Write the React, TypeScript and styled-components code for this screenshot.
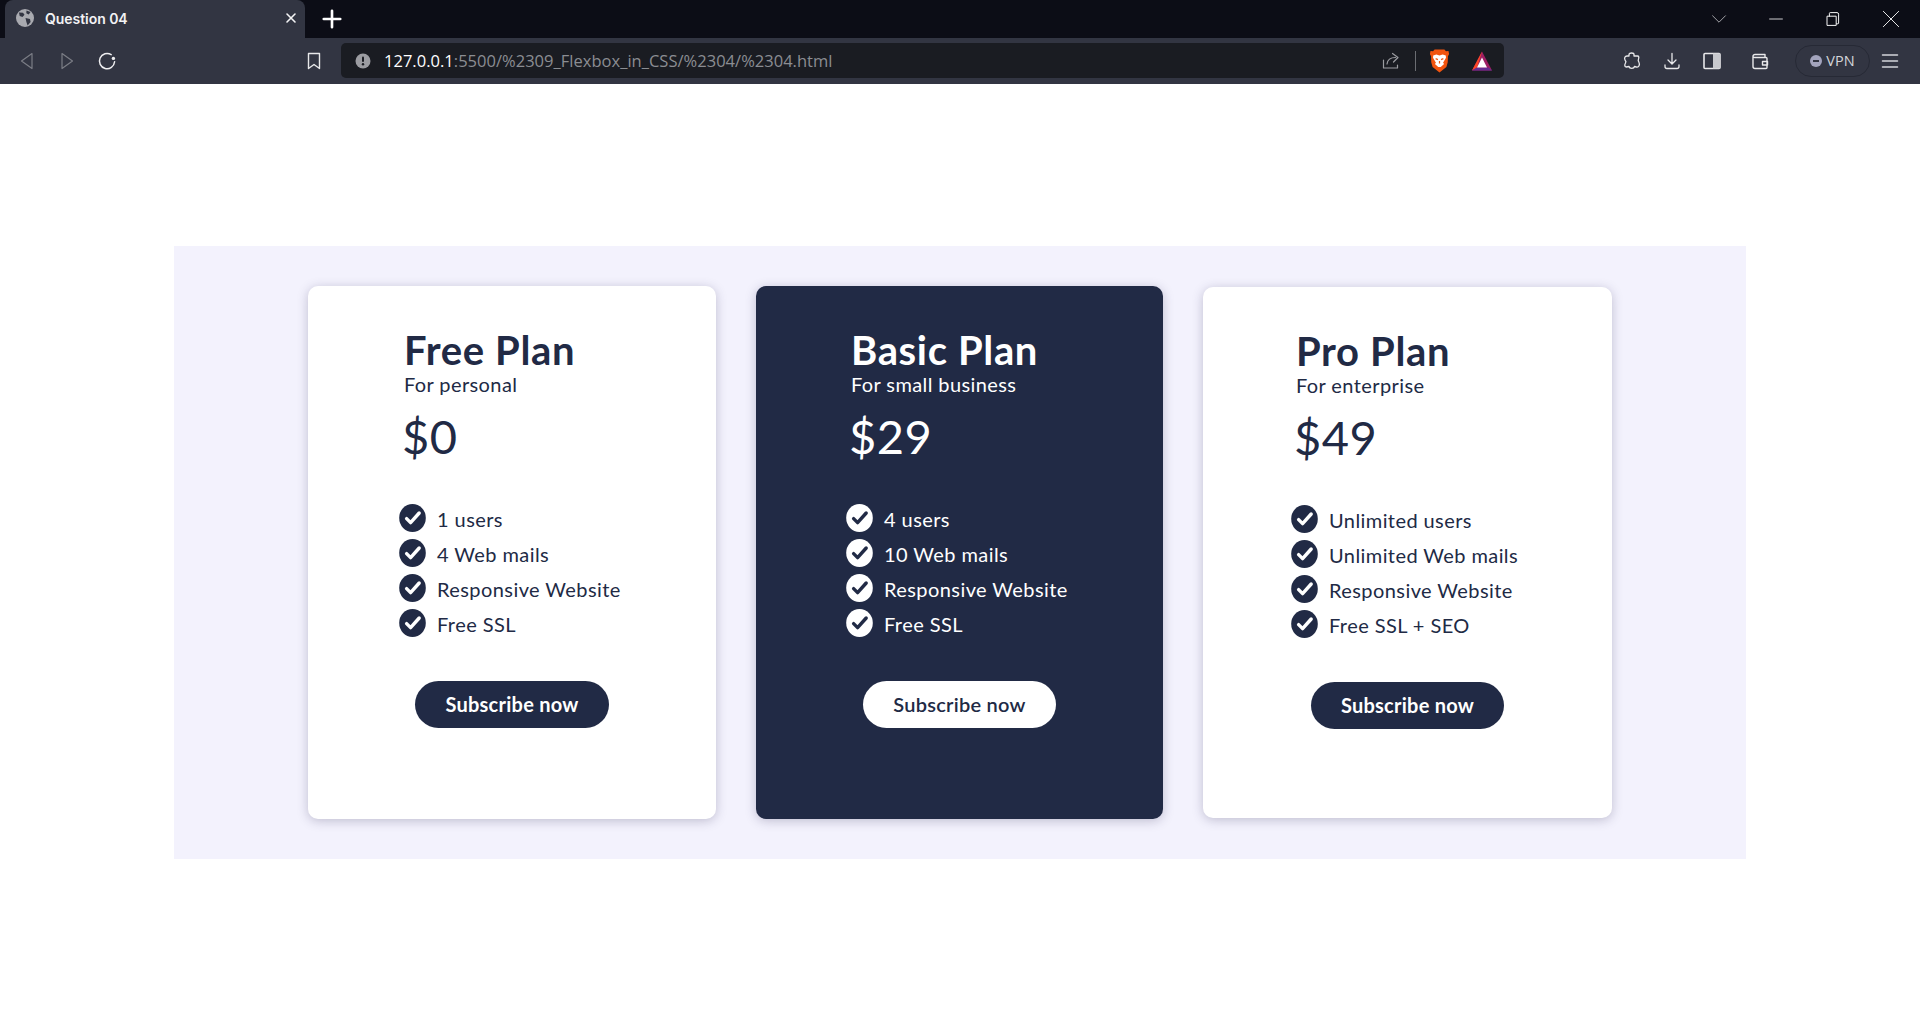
import React from 'react';
import styled, { createGlobalStyle } from 'styled-components';

const NAVY = '#212a45';
const CHROME = '#323542';
const STRIP = '#0c0d16';

const GlobalStyle = createGlobalStyle`
    html, body {
        background: #ffffff;
        margin: 0;
        padding: 0;
    }
    * {
        box-sizing: border-box;
    }
`;

const Page = styled.div`
    min-height: 1017px;
    width: 1920px;
    overflow: hidden;
`;

/* browser chrome */

const TabStrip = styled.div`
    align-items: flex-end;
    background: ${STRIP};
    display: flex;
    height: 38px;
    padding-left: 5px;
`;

const Tab = styled.div`
    align-items: center;
    background: ${CHROME};
    border-radius: 8px 8px 0 0;
    color: #f2f2f4;
    display: flex;
    font-family: Inter, sans-serif;
    font-size: 14px;
    font-weight: 600;
    height: 38px;
    letter-spacing: -0.05px;
    padding: 0 6px 2px 11px;
    width: 300px;
`;

const TabTitle = styled.span`
    flex: 1;
    margin-left: 11px;
`;

const Slot = styled.div<{ $w?: number; $ml?: number }>`
    align-items: center;
    display: flex;
    flex-shrink: 0;
    height: 100%;
    justify-content: center;
    margin-left: ${p => p.$ml ?? 0}px;
    width: ${p => p.$w ?? 40}px;
`;

const Toolbar = styled.div`
    align-items: center;
    background: ${CHROME};
    display: flex;
    height: 46px;
    padding: 0 0 1px 7px;
`;

const AddressBar = styled.div`
    align-items: center;
    background: #1a1c22;
    border-radius: 5px;
    display: flex;
    height: 35px;
    margin-left: 7px;
    padding: 0 11px 0 14px;
    width: 1163px;
`;

const Url = styled.div`
    color: #8b8d92;
    flex: 1;
    font-family: "Open Sans", sans-serif;
    font-size: 16.5px;
    letter-spacing: 0.02px;
    margin-left: 13px;
    white-space: nowrap;
`;

const UrlHost = styled.span`
    color: #ffffff;
`;

const Divider = styled.div`
    background: #6b6d72;
    height: 20px;
    margin: 0 13px 0 14px;
    width: 1px;
`;

const VpnPill = styled.div`
    align-items: center;
    border: 1px solid #262935;
    border-radius: 16px;
    color: #d4d5da;
    display: flex;
    font-family: "Open Sans", sans-serif;
    font-size: 14.5px;
    gap: 4px;
    height: 32px;
    justify-content: center;
    margin-left: 15px;
    width: 75px;
`;

const VpnDot = styled.span`
    background: #a3a4bd;
    border-radius: 50%;
    height: 12px;
    position: relative;
    width: 12px;

    &::after {
        background: #323542;
        content: '';
        height: 2px;
        left: 3px;
        position: absolute;
        top: 5px;
        width: 6px;
    }
`;

/* pricing */

const Main = styled.main`
    padding: 162px 174px 0;
`;

const PricingSection = styled.section`
    align-items: center;
    background: #f3f2fd;
    display: flex;
    gap: 40px;
    height: 613px;
    justify-content: center;
`;

const Card = styled.article<{ $dark?: boolean; $w: number; $h: number; $pl: number }>`
    background: ${p => (p.$dark ? NAVY : '#ffffff')};
    border-radius: 10px;
    box-shadow: 0 2px 11px rgba(50, 48, 90, 0.27);
    color: ${p => (p.$dark ? '#ffffff' : NAVY)};
    font-family: Lato, sans-serif;
    height: ${p => p.$h}px;
    padding: 39px 0 0 ${p => p.$pl}px;
    width: ${p => p.$w}px;
`;

const PlanName = styled.h2`
    font-size: 40px;
    font-weight: 700;
    letter-spacing: 0.65px;
    line-height: 50px;
    margin: 0;
`;

const PlanFor = styled.p`
    font-size: 20px;
    letter-spacing: 0.4px;
    line-height: 22px;
    margin: -2px 0 0;
`;

const Price = styled.div`
    font-size: 47px;
    font-weight: 400;
    letter-spacing: 0.5px;
    line-height: 60px;
    margin: 11px 0 0 -2px;
`;

const Features = styled.ul`
    display: flex;
    flex-direction: column;
    gap: 7px;
    list-style: none;
    margin: 38px 0 0 -5px;
    padding: 0;
`;

const Feature = styled.li`
    align-items: center;
    display: flex;
    font-size: 20px;
    gap: 11px;
    height: 28px;
    letter-spacing: 0.42px;
`;

const FeatureLabel = styled.span`
    padding-top: 2px;
`;

const SubscribeRow = styled.div<{ $ml: number }>`
    display: flex;
    margin: 44px 0 0 ${p => p.$ml}px;
`;

const Subscribe = styled.button<{ $dark?: boolean; $w: number }>`
    background: ${p => (p.$dark ? '#ffffff' : NAVY)};
    border: none;
    border-radius: 24px;
    color: ${p => (p.$dark ? NAVY : '#ffffff')};
    font-family: Lato, sans-serif;
    font-size: 20px;
    font-weight: ${p => (p.$dark ? 600 : 700)};
    height: 47px;
    letter-spacing: 0.25px;
    padding: 0 0 2px;
    width: ${p => p.$w}px;
`;

/* drawings */

function CheckMark({ dark }: { dark?: boolean }) {
    const disc = dark ? '#ffffff' : NAVY;
    const tick = dark ? NAVY : '#ffffff';
    return <svg width="27" height="28" viewBox="0 0 27 28">
        <ellipse cx="13.5" cy="14" rx="13.3" ry="14" fill={disc} />
        <path d="M7.6 14.6l4 4 8.6-9.6" fill="none" stroke={tick} strokeWidth="3.4" strokeLinecap="round" strokeLinejoin="round" />
    </svg>;
}

function Globe() {
    return <svg width="18" height="18" viewBox="0 0 18 18">
        <circle cx="9" cy="9" r="9" fill="#a9aab0" />
        <path d="M3 3.500l4 .2 1.500 2-2 2.300-2.800-1zM9.500 9l4.500 1 .6 3-3 3.600-1.200-3.600zM10.500 1.500l4 1.500-1.800 2.600-2.400-1.400z" fill="#323542" />
    </svg>;
}

function Stroke({ size = 20, width = 1.4, color = '#e8e8ea', d, fill = 'none' }: { size?: number; width?: number; color?: string; d: string; fill?: string }) {
    return <svg width={size} height={size} viewBox="0 0 20 20">
        <path d={d} fill={fill} stroke={color} strokeWidth={width} strokeLinecap="round" strokeLinejoin="round" />
    </svg>;
}

function Reload() {
    return <svg width="20" height="20" viewBox="0 0 20 20">
        <path d="M14.200 3.700A7.600 7.600 0 1 0 17.600 10.800" fill="none" stroke="#eeeef0" strokeWidth="1.500" strokeLinecap="round" />
        <circle cx="16.400" cy="7.400" r="1.700" fill="#eeeef0" />
    </svg>;
}

function AlertDot() {
    return <svg width="16" height="16" viewBox="0 0 16 16">
        <circle cx="8" cy="8" r="7.500" fill="#9b9ca1" />
        <rect x="7" y="3.500" width="2" height="5.600" rx="1" fill="#1a1c22" />
        <circle cx="8" cy="11.200" r="1.200" fill="#1a1c22" />
    </svg>;
}

function BraveLion() {
    return <svg width="21" height="24" viewBox="0 0 19 23">
        <path d="M4.800 0.400h9.400l1.500 1.800 2.400-.3.600 3-1.100 2.100-.2 5.800-1.300 4.500-6.600 5.300-6.600-5.300-1.300-4.500-.2-5.800L.3 4.900l.6-3 2.400.3z" fill="#f1540f" />
        <path d="M3.500 6.200l3-1 3 1 3-1 3 1 .2 2.300-1.800 3-1 1.600 1 1.300-3.200 2.800h-2.400l-3.200-2.800 1-1.300-1-1.600-1.800-3z" fill="#ffffff" />
        <path d="M5.800 9.300l2.200.8M13.200 9.300l-2.200.8M9.500 11.500v2.500" stroke="#f1540f" strokeWidth="1.200" fill="none" />
    </svg>;
}

function BatTriangle() {
    return <svg width="22" height="20" viewBox="0 0 20 20">
        <path d="M10 0.500L0 19.500h20z" fill="#9e1f63" />
        <path d="M10 0.500L0 19.500l5-3z" fill="#ff4724" />
        <path d="M0 19.500h20l-3.500-3h-11.500z" fill="#662d91" />
        <path d="M10 6.500l-5 10h10z" fill="#ffffff" />
    </svg>;
}

const PLANS = [
    { name: 'Free Plan', sub: 'For personal', price: '$0', w: 408, h: 533, pl: 96, btn: 107, btnW: 194,
      items: ['1 users', '4 Web mails', 'Responsive Website', 'Free SSL'] },
    { name: 'Basic Plan', sub: 'For small business', price: '$29', dark: true, w: 407, h: 533, pl: 95, btn: 107, btnW: 193,
      items: ['4 users', '10 Web mails', 'Responsive Website', 'Free SSL'] },
    { name: 'Pro Plan', sub: 'For enterprise', price: '$49', w: 409, h: 531, pl: 93, btn: 108, btnW: 193,
      items: ['Unlimited users', 'Unlimited Web mails', 'Responsive Website', 'Free SSL + SEO'] },
];

function BrowserChrome() {
    return <>
        <TabStrip>
            <Tab>
                <Globe />
                <TabTitle>Question 04</TabTitle>
                <Stroke size={16} width={2} color="#f4f4f5" d="M5 5l10 10M15 5L5 15" />
            </Tab>
            <Slot $ml={7}><Stroke size={22} width={2.4} color="#ffffff" d="M10 2.500v15M2.500 10h15" /></Slot>
            <Slot $ml={1347}><Stroke size={16} width={1} color="#c8c8cc" d="M2 6l8 8 8-8" /></Slot>
            <Slot $ml={17}><Stroke size={16} width={1} color="#ffffff" d="M2 10h16" /></Slot>
            <Slot $ml={17}><Stroke size={16} width={1.2} color="#ffffff" d="M3 6.500h11v11.500h-11zM5.500 6.500v-3.500a1 1 0 0 1 1-1h8.500a2 2 0 0 1 2 2v11a1 1 0 0 1-1 1h-1.500" /></Slot>
            <Slot $ml={18}><Stroke size={18} width={1} color="#ffffff" d="M1.500 1.500l17 17M18.500 1.500l-17 17" /></Slot>
        </TabStrip>
        <Toolbar>
            <Slot><Stroke size={20} width={1.2} color="#7b7d85" d="M15 2.500L4.500 10 15 17.500z" /></Slot>
            <Slot><Stroke size={20} width={1.2} color="#7b7d85" d="M5 2.500L15.500 10 5 17.500z" /></Slot>
            <Slot><Reload /></Slot>
            <Slot $ml={167}><Stroke size={20} width={1.4} color="#e8e8ea" d="M4.500 2.500h11v15L10 13.500l-5.500 4z" /></Slot>
            <AddressBar>
                <AlertDot />
                <Url><UrlHost>127.0.0.1</UrlHost>:5500/%2309_Flexbox_in_CSS/%2304/%2304.html</Url>
                <Stroke size={20} width={1.2} color="#9b9ca1" d="M2.500 9v8h14v-3M6 13c.5-4 3-6.500 8.500-6.500M11.500 2.500l5.500 4-4.500 4.500" />
                <Divider />
                <BraveLion />
                <Slot $w={22} $ml={21}><BatTriangle /></Slot>
            </AddressBar>
            <Slot $ml={108}><Stroke size={20} width={1.3} d="M7 3.500C7 1.500 12 1.500 12 3.500L12 5H15.500C17 5 17 6.500 16.500 8C16 9 16 10 17 11.500C18 13.500 17 16.500 14.500 16L12.500 15.500C12 18 7.500 18 7 15.500L4 16C2.500 15.500 2.500 13.500 3.500 12C4.300 11 4 10 3 9C2 7 3 5 5 5L7 5Z" /></Slot>
            <Slot><Stroke size={20} width={1.3} d="M10 2.500v10M6 9l4 4 4-4M3 14v1.500a2 2 0 0 0 2 2h10a2 2 0 0 0 2-2V14" /></Slot>
            <Slot>
                <svg width="18" height="18" viewBox="0 0 18 18">
                    <rect x="1" y="1.500" width="16" height="15" rx="1" fill="none" stroke="#e8e8ea" strokeWidth="1.600" />
                    <rect x="10" y="1.500" width="7" height="15" fill="#c8c9ce" />
                </svg>
            </Slot>
            <Slot $ml={8}><Stroke size={20} width={1.4} d="M3 5.500v10a2 2 0 0 0 2 2h11a1 1 0 0 0 1-1v-9a1 1 0 0 0-1-1H5a2 2 0 0 1-2-1 2 2 0 0 1 2-2h10v3M12.500 10.500h5v3.500h-5z" /></Slot>
            <VpnPill><VpnDot />VPN</VpnPill>
            <Slot><Stroke size={20} width={1.500} color="#d4d5da" d="M2.500 4h15M2.500 10h15M2.500 16h15" /></Slot>
        </Toolbar>
    </>;
}

export default function App() {
    return <Page>
        <GlobalStyle />
        <BrowserChrome />
        <Main>
            <PricingSection>
                {PLANS.map(plan => (
                    <Card key={plan.name} $dark={plan.dark} $w={plan.w} $h={plan.h} $pl={plan.pl}>
                        <PlanName>{plan.name}</PlanName>
                        <PlanFor>{plan.sub}</PlanFor>
                        <Price>{plan.price}</Price>
                        <Features>
                            {plan.items.map(item => (
                                <Feature key={item}>
                                    <CheckMark dark={plan.dark} />
                                    <FeatureLabel>{item}</FeatureLabel>
                                </Feature>
                            ))}
                        </Features>
                        <SubscribeRow $ml={plan.btn - plan.pl}>
                            <Subscribe $dark={plan.dark} $w={plan.btnW}>Subscribe now</Subscribe>
                        </SubscribeRow>
                    </Card>
                ))}
            </PricingSection>
        </Main>
    </Page>;
}
